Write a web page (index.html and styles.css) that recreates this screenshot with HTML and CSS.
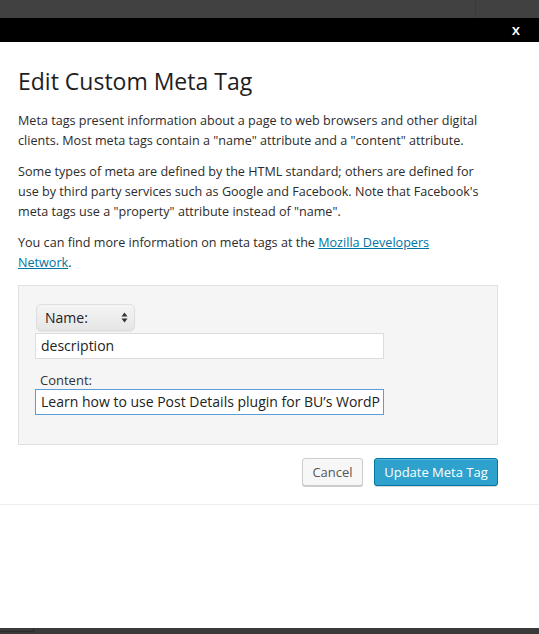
FILE: index.html
```html
<!DOCTYPE html>
<html>
<head>
<meta charset="utf-8">
<link rel="stylesheet" href="styles.css">
</head>
<body>
<div class="page">
  <div class="topstrip"><span class="topsep"></span></div>
  <div class="titlebar"><span class="close">x</span></div>
  <div class="modal">
    <div class="content">
      <h1 class="title">Edit Custom Meta Tag</h1>
      <p class="para">Meta tags present information about a page to web browsers and other digital clients. Most meta tags contain a "name" attribute and a "content" attribute.</p>
      <p class="para">Some types of meta are defined by the HTML standard; others are defined for use by third party services such as Google and Facebook. Note that Facebook's meta tags use a "property" attribute instead of "name".</p>
      <p class="para">You can find more information on meta tags at the <a class="link" href="#">Mozilla Developers</a> <a class="link" href="#">Network</a>.</p>
      <div class="panel">
        <div class="select">
          <span class="select-label">Name:</span>
          <svg class="arrows" width="7" height="11" viewBox="0 0 7 11"><path d="M3.5 0.5L6.5 4.5H0.5Z M3.5 10.5L6.5 6.5H0.5Z" fill="#333"/></svg>
        </div>
        <div class="field">description</div>
        <div class="label">Content:</div>
        <div class="field focused">Learn how to use Post Details plugin for BU’s WordP</div>
      </div>
      <div class="actions">
        <span class="btn cancel">Cancel</span>
        <span class="btn primary">Update Meta Tag</span>
      </div>
    </div>
    <div class="footer"></div>
  </div>
  <div class="bottomstrip"><span class="bottomtab"></span></div>
</div>
</body>
</html>
```

FILE: styles.css
```css
* { box-sizing: border-box; }
html, body { margin: 0; padding: 0; }
body {
  width: 539px;
  height: 634px;
  overflow: hidden;
  font-family: "Open Sans", "Liberation Sans", sans-serif;
  color: #333;
  background: #fff;
}
.page {
  display: flex;
  flex-direction: column;
  height: 634px;
}
.topstrip {
  height: 18px;
  background: #414141;
  position: relative;
}
.topsep {
  position: absolute;
  left: 475px;
  top: 0;
  width: 1px;
  height: 18px;
  background: #3a3a3a;
}
.titlebar {
  height: 24px;
  background: #000;
  display: flex;
  justify-content: flex-end;
  align-items: center;
  padding-right: 19px;
}
.close {
  color: #fff;
  font-size: 15px;
  font-weight: 600;
  line-height: 1;
  margin-top: -1px;
}
.modal {
  flex: 1;
  display: flex;
  flex-direction: column;
}
.content {
  padding: 23px 41px 18px 18px;
}
.title {
  margin: 0 0 14px;
  font-size: 23px;
  font-weight: 400;
  line-height: 32px;
  color: #1e1e1e;
}
.para {
  margin: 0 0 11px;
  max-width: 462px;
  font-size: 12.6px;
  line-height: 20px;
  color: #2c2c2c;
}
.link {
  color: #0074a2;
  text-decoration: underline;
}
.panel {
  margin-top: 12px;
  background: #f5f5f5;
  border: 1px solid #e0e0e0;
  height: 160px;
  padding: 18px 113px 0 16px;
  display: flex;
  flex-direction: column;
}
.select {
  width: 99px;
  height: 27px;
  margin-left: 1px;
  border-radius: 5px;
  background: linear-gradient(#f4f4f4, #e6e6e6);
  border: 1px solid #dedede;
  box-shadow: 0 1px 1px rgba(0,0,0,0.06);
  display: flex;
  align-items: center;
  justify-content: space-between;
  padding: 0 6px 0 8px;
  font-size: 14px;
  color: #222;
}
.field {
  height: 26px;
  background: #fff;
  border: 1px solid #dddddd;
  font-size: 14px;
  line-height: 24px;
  padding: 0 5px;
  color: #222;
  white-space: nowrap;
  overflow: hidden;
}
.select + .field { margin-top: 2px; }
.label {
  font-size: 13px;
  line-height: 15px;
  margin: 14px 0 0 5px;
  color: #333;
}
.field.focused {
  border-color: #5b9dd9;
  margin-top: 1px;
}
.actions {
  display: flex;
  justify-content: flex-end;
  gap: 11px;
  margin-top: 13px;
}
.btn {
  height: 28px;
  border-radius: 3px;
  font-size: 13px;
  line-height: 26px;
  padding: 0 10px;
  border: 1px solid;
}
.cancel {
  background: #f7f7f7;
  border-color: #cccccc;
  color: #555;
  box-shadow: 0 1px 0 #ccc;
  width: 61px;
  text-align: center;
  padding: 0;
}
.primary {
  background: #2ea2cc;
  border-color: #0074a2;
  color: #fff;
  box-shadow: inset 0 1px 0 rgba(120,200,230,0.5), 0 1px 0 rgba(0,0,0,0.15);
  width: 124px;
  text-align: center;
  padding: 0;
}
.footer {
  flex: 1;
  border-top: 1px solid #eeeeee;
}
.bottomstrip {
  height: 6px;
  background: #3a3a3a;
  position: relative;
}
.bottomtab {
  position: absolute;
  left: 0;
  top: 0;
  width: 34px;
  height: 4px;
  border-right: 1px solid #2a2a2a;
  border-bottom: 1px solid #2a2a2a;
}
```
